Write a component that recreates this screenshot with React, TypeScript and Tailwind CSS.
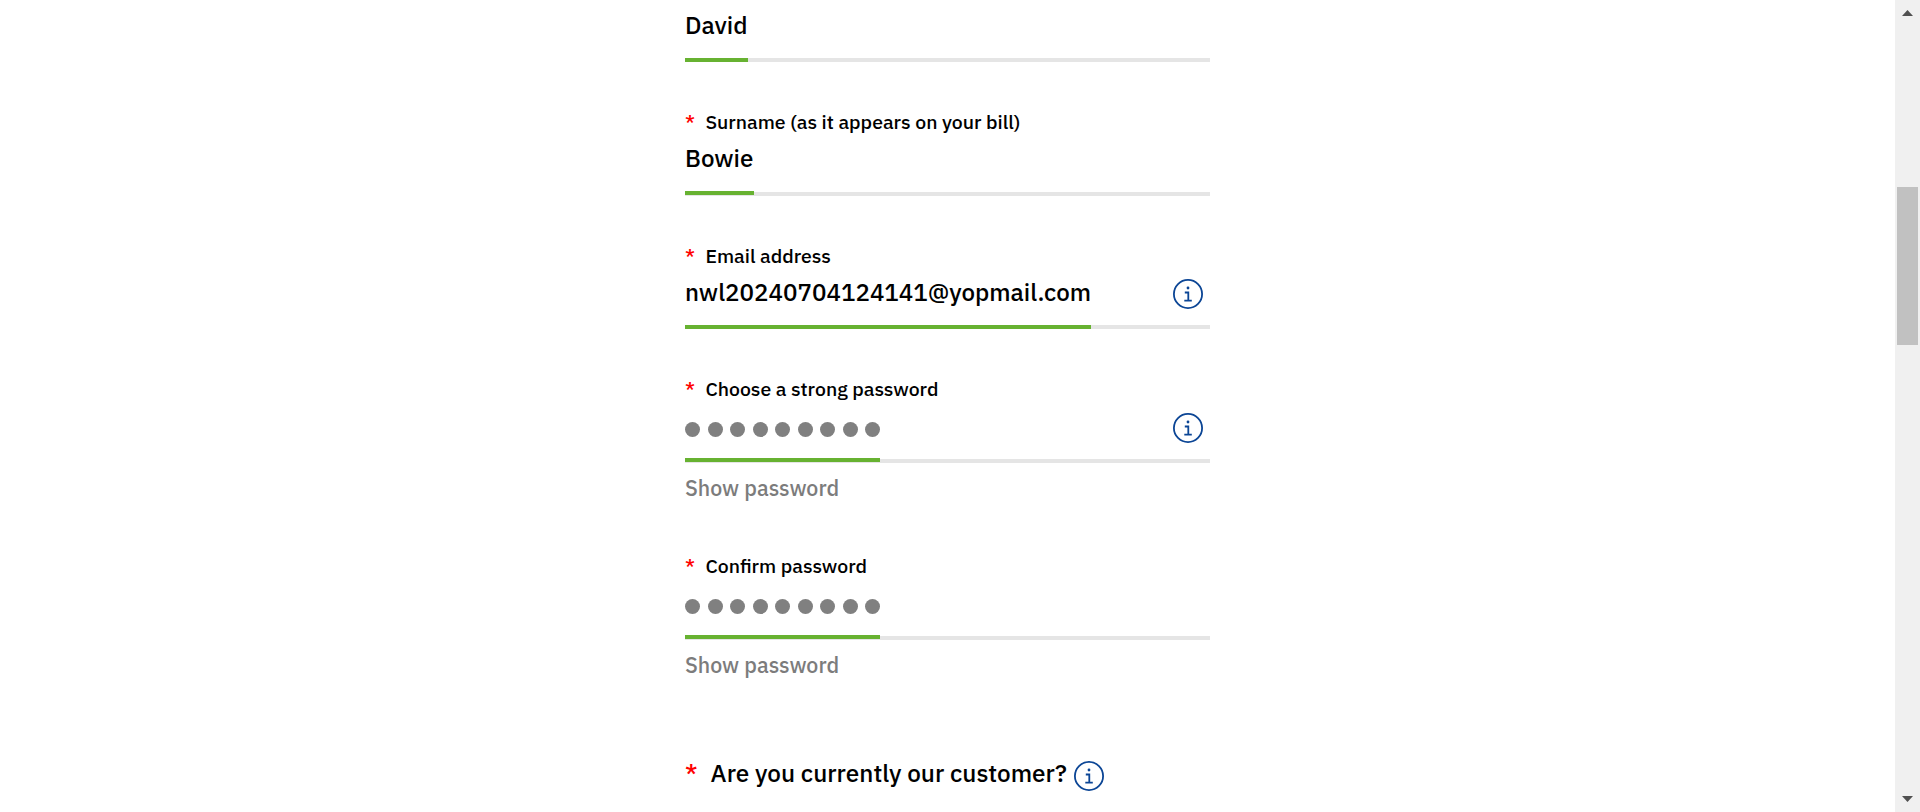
import type { ReactNode } from 'react';

function InfoIcon({ className = '' }: { className?: string }) {
  return (
    <svg viewBox="0 0 30 30" className={`size-[30px] shrink-0 ${className}`} fill="none" stroke="#0b4595" aria-label="More information">
      <circle cx="15" cy="15" r="14.1" strokeWidth="1.8" />
      <path d="M11.8 13.5H15.3V21.3M11.3 21.6H18.8" strokeWidth="1.8" />
      <circle cx="15" cy="9" r="1.4" fill="#0b4595" stroke="none" />
    </svg>
  );
}

function Label({ children }: { children: ReactNode }) {
  return (
    <div className="mb-2 flex h-6 text-[19.44px] leading-6">
      <span className="w-[20.4px] text-[#ff0000]">*</span>
      <span>{children}</span>
    </div>
  );
}

type FieldProps = {
  label?: string;
  children: ReactNode;
  info?: ReactNode;
  barClass: string;
  valueClass?: string;
};

function Field({ label, children, info, barClass, valueClass = 'h-[50px]' }: FieldProps) {
  return (
    <div>
      {label && <Label>{label}</Label>}
      <div className={`flex items-start justify-between text-[24.15px] leading-8 ${valueClass}`}>
        {children}
        {info}
      </div>
      <div className="h-1 bg-[#e5e5e5]">
        <div className={`h-1 bg-[#67b231] ${barClass}`} />
      </div>
    </div>
  );
}

function Dots() {
  return (
    <div className="mt-[13px] flex w-[195px] justify-between">
      {Array.from({ length: 9 }, (_, i) => (
        <span key={i} className="size-[15px] rounded-full bg-[#808080]" />
      ))}
    </div>
  );
}

function ShowPassword() {
  return <div className="mt-[11px] h-[31px] text-[21.4px] leading-7 text-[#7c7c7c]">Show password</div>;
}

export default function App() {
  return (
    <div className="flex h-[812px] overflow-hidden bg-white font-['IBM_Plex_Sans','Noto_Sans',sans-serif] font-medium text-black">
      <main className="flex flex-1 justify-center">
        <form className="w-[525px] pt-2">
          <Field barClass="w-[63px]" valueClass="h-[50px] pt-px">
            David
          </Field>
          <div className="mt-12">
            <Field label="Surname (as it appears on your bill)" barClass="relative -top-px w-[69px]">
              Bowie
            </Field>
          </div>
          <div className="mt-12">
            <Field
              label="Email address"
              barClass="w-[406px]"
              valueClass="h-[49px]"
              info={<InfoIcon className="mt-[3px] mr-[7.4px]" />}
            >
              nwl20240704124141@yopmail.com
            </Field>
          </div>
          <div className="mt-12">
            <Field
              label="Choose a strong password"
              barClass="relative -top-px w-[195px]"
              info={<InfoIcon className="mt-1 mr-[7.4px]" />}
            >
              <Dots />
            </Field>
            <ShowPassword />
          </div>
          <div className="mt-[49px]">
            <Field label="Confirm password" barClass="relative -top-px w-[195px]">
              <Dots />
            </Field>
            <ShowPassword />
          </div>
          <div className="mt-[75px] flex text-[24.3px] leading-8">
            <span className="w-[25.6px] text-[#ff0000]">*</span>
            <span>Are you currently our customer?</span>
            <InfoIcon className="mt-1 ml-[7.4px]" />
          </div>
        </form>
      </main>
      <aside className="flex w-[25px] flex-col items-center bg-[#f0f0f0]">
        <svg viewBox="0 0 11 6" className="mt-[10px] h-[6px] w-[11px]" fill="#505050">
          <path d="M5.5 0L11 6H0Z" />
        </svg>
        <div className="mt-[171px] h-[158px] w-[21px] bg-[#c1c1c1]" />
        <svg viewBox="0 0 11 6" className="mt-auto mb-[10px] h-[6px] w-[11px]" fill="#505050">
          <path d="M0 0H11L5.5 6Z" />
        </svg>
      </aside>
    </div>
  );
}
